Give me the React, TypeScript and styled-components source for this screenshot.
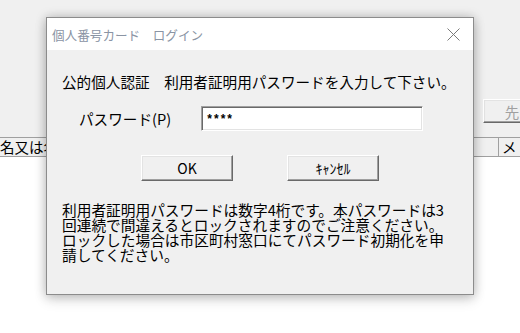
import React from 'react';
import styled, { createGlobalStyle } from 'styled-components';

const GlobalStyle = createGlobalStyle`
  html, body {
    margin: 0;
    padding: 0;
    background: #ffffff;
  }
  body {
    font-family: "Noto Sans CJK JP", "Noto Sans", sans-serif;
    color: #000;
  }
`;

const Desktop = styled.div`
  position: relative;
  width: 520px;
  height: 333px;
  overflow: hidden;
`;

// the application window that lies behind the dialog
const BackApp = styled.div`
  display: flex;
  flex-direction: column;
  width: 100%;
  height: 100%;
`;

const ToolArea = styled.div`
  height: 137px;
  background: #f0f0f0;
  display: flex;
  justify-content: flex-end;
  align-items: flex-start;
  padding-top: 99px;
  box-sizing: border-box;
  margin-right: -21px;
`;

const ToolButton = styled.div`
  width: 58px;
  height: 24px;
  box-sizing: border-box;
  display: flex;
  align-items: center;
  justify-content: center;
  background: #f0f0f0;
  border: 1px solid;
  border-color: #ffffff #696969 #696969 #ffffff;
  box-shadow: inset -1px -1px 0 #a0a0a0, inset 1px 1px 0 #e3e3e3;
  color: #a0a0a0;
  font-size: 14.5px;
`;

const HeaderRow = styled.div`
  height: 20px;
  display: grid;
  grid-template-columns: 499px 1fr;
  box-sizing: border-box;
  border-top: 1px solid #a0a0a0;
  border-bottom: 1px solid #a0a0a0;
  background: #f0f0f0;
`;

const HeaderCell = styled.div<{ divider?: boolean }>`
  display: flex;
  align-items: center;
  padding-left: ${({ divider }) => (divider ? '0' : '3px')};
  border-right: ${({ divider }) => (divider ? '1px solid #a0a0a0' : 'none')};
  font-size: 14.5px;
  line-height: 1;
  white-space: nowrap;
  overflow: hidden;
`;

const ListBody = styled.div`
  flex: 1;
  background: #ffffff;
`;

// the modal dialog, a window on the desktop
const Dialog = styled.div`
  position: absolute;
  left: 46px;
  top: 17px;
  width: 428px;
  height: 278px;
  box-sizing: border-box;
  border: 1px solid #8c8c8c;
  background: #f0f0f0;
  display: flex;
  flex-direction: column;
  box-shadow: 0 0 10px rgba(0, 0, 0, 0.22), 0 5px 12px rgba(0, 0, 0, 0.14);
`;

const TitleBar = styled.div`
  height: 32px;
  background: #ffffff;
  display: flex;
  align-items: center;
  justify-content: space-between;
  padding: 0 13px 0 5px;
`;

const TitleText = styled.div`
  font-size: 12.6px;
  color: #8a94a4;
  white-space: nowrap;
`;

const CloseIcon = () => (
  <svg width="13" height="13" viewBox="0 0 13 13">
    <path d="M0.5 0.5 L12.5 12.5 M12.5 0.5 L0.5 12.5" stroke="#7a7a7a" strokeWidth="1" fill="none" />
  </svg>
);

const DialogBody = styled.div`
  flex: 1;
  display: flex;
  flex-direction: column;
  padding: 23px 0 0 15px;
`;

const Instruction = styled.div`
  font-size: 14.6px;
  line-height: 18px;
  white-space: nowrap;
`;

const PasswordRow = styled.div`
  margin-top: 15px;
  display: flex;
  align-items: center;
`;

const FieldLabel = styled.div`
  width: 139px;
  flex-shrink: 0;
  box-sizing: border-box;
  padding-left: 17px;
  font-size: 14.6px;
  white-space: nowrap;
`;

const PasswordBox = styled.div`
  width: 222px;
  height: 25px;
  box-sizing: border-box;
  background: #ffffff;
  border: 1px solid;
  border-color: #a0a0a0 #ffffff #ffffff #a0a0a0;
  box-shadow: inset 1px 1px 0 #696969, inset -1px -1px 0 #e3e3e3;
  display: flex;
  align-items: center;
  padding: 2px 0 0 4px;
  font-family: "Liberation Mono", monospace;
  font-weight: bold;
  font-size: 12px;
  letter-spacing: -0.5px;
`;

const ButtonRow = styled.div`
  margin-top: 24px;
  padding-left: 79px;
  display: flex;
  gap: 54px;
`;

const PushButton = styled.div`
  width: 92px;
  height: 26px;
  box-sizing: border-box;
  display: flex;
  align-items: center;
  justify-content: center;
  background: #f0f0f0;
  border: 1px solid;
  border-color: #ffffff #696969 #696969 #ffffff;
  box-shadow: inset -1px -1px 0 #a0a0a0, inset 1px 1px 0 #e3e3e3;
  font-size: 14px;
`;

const Notes = styled.div`
  margin-top: 21px;
  font-size: 14.7px;
  line-height: 15px;
  white-space: nowrap;
`;

export default function App() {
  return (
    <>
      <GlobalStyle />
      <Desktop>
        <BackApp>
          <ToolArea>
            <ToolButton>先</ToolButton>
          </ToolArea>
          <HeaderRow>
            <HeaderCell divider>名又は名称</HeaderCell>
            <HeaderCell>メ</HeaderCell>
          </HeaderRow>
          <ListBody />
        </BackApp>

        <Dialog>
          <TitleBar>
            <TitleText>個人番号カード　ログイン</TitleText>
            <CloseIcon />
          </TitleBar>
          <DialogBody>
            <Instruction>公的個人認証　利用者証明用パスワードを入力して下さい。</Instruction>
            <PasswordRow>
              <FieldLabel>パスワード(P)</FieldLabel>
              <PasswordBox>****</PasswordBox>
            </PasswordRow>
            <ButtonRow>
              <PushButton>OK</PushButton>
              <PushButton>ｷｬﾝｾﾙ</PushButton>
            </ButtonRow>
            <Notes>
              利用者証明用パスワードは数字4桁です。本パスワードは3
              <br />
              回連続で間違えるとロックされますのでご注意ください。
              <br />
              ロックした場合は市区町村窓口にてパスワード初期化を申
              <br />
              請してください。
            </Notes>
          </DialogBody>
        </Dialog>
      </Desktop>
    </>
  );
}
